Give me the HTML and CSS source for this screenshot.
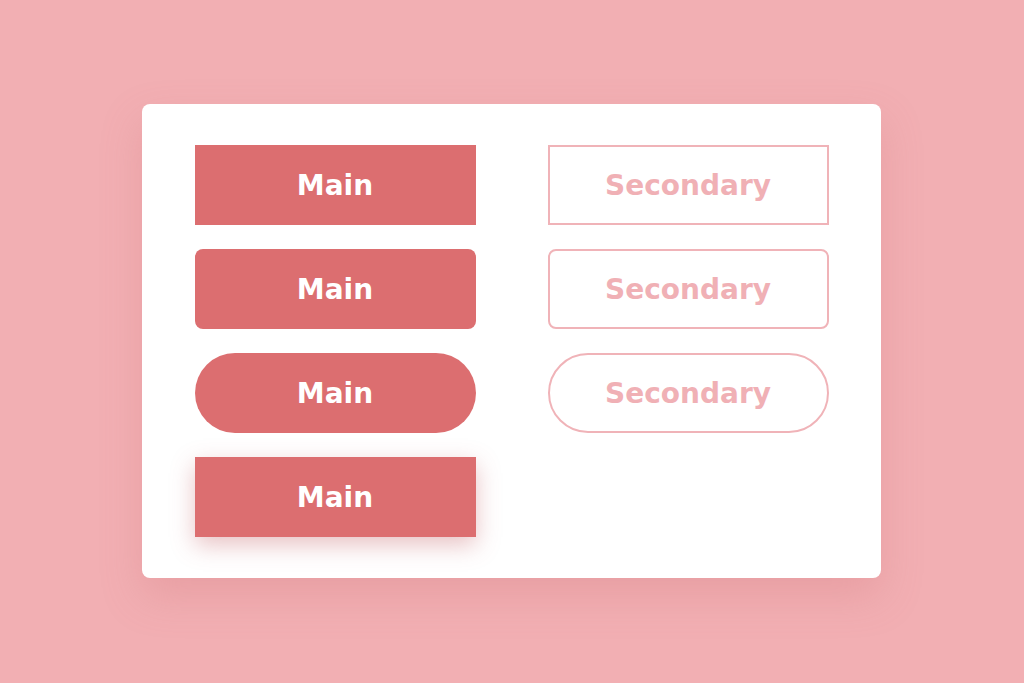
FILE: index.html
```html
<!DOCTYPE html>
<html lang="en">
<head>
<meta charset="utf-8">
<title>Buttons</title>
<link rel="stylesheet" href="styles.css">
</head>
<body>
  <main class="card">
    <div class="grid">
      <button class="btn btn-main">Main</button>
      <button class="btn btn-secondary">Secondary</button>
      <button class="btn btn-main rounded">Main</button>
      <button class="btn btn-secondary rounded">Secondary</button>
      <button class="btn btn-main pill">Main</button>
      <button class="btn btn-secondary pill">Secondary</button>
      <button class="btn btn-main raised">Main</button>
    </div>
  </main>
</body>
</html>
```

FILE: styles.css
```css
html, body {
  margin: 0;
  height: 100%;
}

body {
  background: #f2afb3;
  display: flex;
  align-items: center;
  justify-content: center;
  font-family: "DejaVu Sans", "Open Sans", sans-serif;
}

.card {
  width: 739px;
  box-sizing: border-box;
  margin: 0 2px 1px 0;
  padding: 41px 52px 41px 53px;
  background: #ffffff;
  border-radius: 8px;
  box-shadow: 0 18px 40px rgba(205, 110, 115, 0.25);
}

.grid {
  display: grid;
  grid-template-columns: 281px 281px;
  column-gap: 72px;
  row-gap: 24px;
}

.btn {
  height: 80px;
  margin: 0;
  padding: 0;
  font-family: inherit;
  font-size: 28px;
  font-weight: 700;
  cursor: pointer;
  display: flex;
  align-items: center;
  justify-content: center;
}

.btn-main {
  background: #dc6e70;
  color: #ffffff;
  border: none;
}

.btn-secondary {
  background: #ffffff;
  color: #f0b0b5;
  border: 2px solid #f0b3b8;
}

.rounded {
  border-radius: 8px;
}

.pill {
  border-radius: 40px;
}

.raised {
  box-shadow: 0 8px 22px rgba(190, 80, 85, 0.35);
}
```
